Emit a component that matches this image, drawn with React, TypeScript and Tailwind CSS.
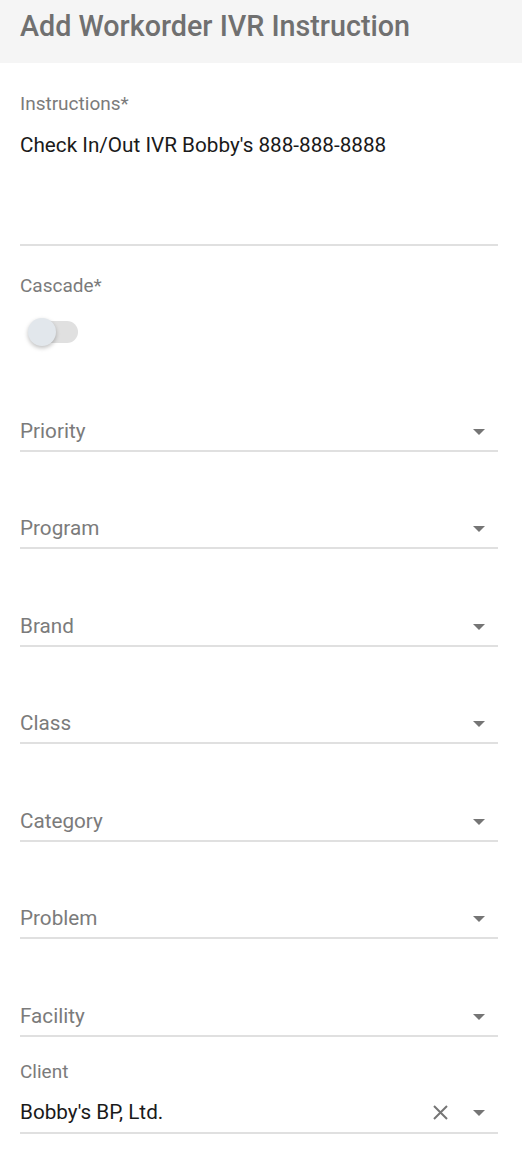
import React from "react";

const font = { fontFamily: "Roboto, 'Noto Sans', Arial, sans-serif" };

function Arrow() {
  return (
    <div className="w-[12px] mr-[13px] flex justify-center shrink-0">
      <svg width="12" height="6" viewBox="0 0 12 6" className="mt-[2px]">
        <path d="M0 0 L12 0 L6 6 Z" fill="#757575" />
      </svg>
    </div>
  );
}

function SelectRow({ label }: { label: string }) {
  return (
    <div className="h-[97.5px] flex flex-col justify-end">
      <div className="flex items-center border-b-2 border-[#e0e0e0] pb-[7.3px]">
        <span className="flex-1 text-[20.7px] leading-6 text-[#7b7b7b]">{label}</span>
        <Arrow />
      </div>
    </div>
  );
}

export default function App() {
  return (
    <div className="w-[522px] min-h-[1158px] bg-white" style={font}>
      <div className="h-[63px] bg-[#f5f5f5] pl-[20px] pt-[10px]">
        <h1 className="text-[28.7px] leading-[32px] font-medium text-[#707070]">
          Add Workorder IVR Instruction
        </h1>
      </div>
      <div className="pl-[20px] pr-[24px] pt-[28.5px]">
        <div className="text-[19px] leading-6 text-[#7b7b7b]">Instructions*</div>
        <div className="mt-[17.7px] h-[112.8px] border-b-2 border-[#e0e0e0]">
          <div className="text-[20.7px] leading-6 text-[#1a1a1a]">
            Check In/Out IVR Bobby's 888-888-8888
          </div>
        </div>
        <div className="mt-[28.2px] text-[19px] leading-6 text-[#7b7b7b]">Cascade*</div>
        <div className="mt-[19.8px] ml-[8px] relative w-[50px] h-[28px]">
          <div className="absolute left-[2px] top-[3px] w-[48px] h-[22px] rounded-full bg-[#e0e0e0]" />
          <div className="absolute left-0 top-0 w-[28px] h-[28px] rounded-full bg-[#e2e7ec] shadow-[0_2px_4px_rgba(0,0,0,0.25)]" />
        </div>
        <div className="mt-[8.5px]">
          <SelectRow label="Priority" />
          <SelectRow label="Program" />
          <SelectRow label="Brand" />
          <SelectRow label="Class" />
          <SelectRow label="Category" />
          <SelectRow label="Problem" />
          <SelectRow label="Facility" />
        </div>
        <div className="mt-[22.8px] text-[19px] leading-6 text-[#7b7b7b]">Client</div>
        <div className="mt-[16.4px] flex items-center border-b-2 border-[#e0e0e0] pb-[8.3px]">
          <span className="flex-1 text-[20.7px] leading-6 text-[#1a1a1a]">Bobby's BP, Ltd.</span>
          <svg width="15" height="15" viewBox="0 0 15 15" className="mr-[25px] shrink-0">
            <path d="M1 1 L14 14 M14 1 L1 14" stroke="#757575" strokeWidth="2" />
          </svg>
          <Arrow />
        </div>
      </div>
    </div>
  );
}
